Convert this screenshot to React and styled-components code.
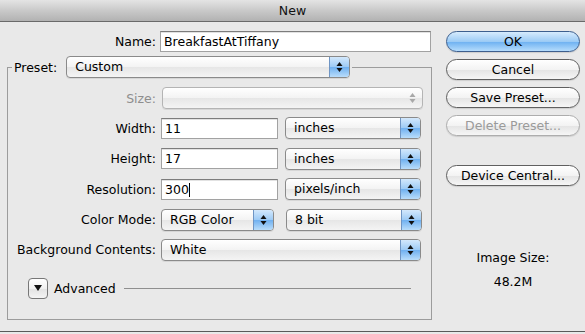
import styled, { createGlobalStyle } from 'styled-components';

const GlobalStyle = createGlobalStyle`
  html, body {
    margin: 0;
    padding: 0;
    background: #e9e9e9;
  }
  body {
    font-family: "DejaVu Sans", "Liberation Sans", sans-serif;
    font-size: 12.5px;
    color: #000;
  }
`;

const Arrows = ({ disabled }) => (
  <svg width="7" height="12" viewBox="0 0 7 12">
    <path d="M3.5 1 L6.5 5 L0.5 5 Z" fill={disabled ? '#a8a8a8' : '#111'} />
    <path d="M3.5 11 L6.5 7 L0.5 7 Z" fill={disabled ? '#a8a8a8' : '#111'} />
  </svg>
);

const Select = ({ value, width, disabled }) => (
  <PopUp $width={width} $disabled={disabled}>
    <PopText>{value}</PopText>
    <ArrowBox $disabled={disabled}>
      <Arrows disabled={disabled} />
    </ArrowBox>
  </PopUp>
);

const App = () => {
  return (
    <>
      <GlobalStyle />
      <Window>
        <TitleBar>New</TitleBar>
        <Body>
          <Main>
            <NameRow>
              <Label>Name:</Label>
              <TextField $width={271}>BreakfastAtTiffany</TextField>
            </NameRow>
            <Group>
              <Legend>
                <Label>Preset:</Label>
                <Select value="Custom" width={284} />
              </Legend>
              <Rows>
                <Label $disabled>Size:</Label>
                <Controls $indent={1}>
                  <Select value="" width={261} disabled />
                </Controls>

                <Label>Width:</Label>
                <Controls>
                  <TextField $width={117}>11</TextField>
                  <Select value="inches" width={136} />
                </Controls>

                <Label>Height:</Label>
                <Controls>
                  <TextField $width={117}>17</TextField>
                  <Select value="inches" width={136} />
                </Controls>

                <Label>Resolution:</Label>
                <Controls>
                  <TextField $width={117}>
                    300<Caret />
                  </TextField>
                  <Select value="pixels/inch" width={136} />
                </Controls>

                <Label>Color Mode:</Label>
                <Controls $gap={12}>
                  <Select value="RGB Color" width={113} />
                  <Select value="8 bit" width={136} />
                </Controls>

                <Label>Background Contents:</Label>
                <Controls>
                  <Select value="White" width={260} />
                </Controls>
              </Rows>
              <AdvancedRow>
                <Disclosure>
                  <svg width="8" height="6" viewBox="0 0 8 6">
                    <path d="M0 0 L8 0 L4 6 Z" fill="#111" />
                  </svg>
                </Disclosure>
                <AdvancedText>Advanced</AdvancedText>
                <Rule />
              </AdvancedRow>
            </Group>
          </Main>
          <Side>
            <Button $default>OK</Button>
            <Button>Cancel</Button>
            <Button>Save Preset...</Button>
            <Button disabled>Delete Preset...</Button>
            <Button $space={22}>Device Central...</Button>
            <SizeInfo>
              <div>Image Size:</div>
              <div>48.2M</div>
            </SizeInfo>
          </Side>
        </Body>
      </Window>
    </>
  );
};

export default App;

const Window = styled.div`
  height: 331px;
  display: flex;
  flex-direction: column;
  background: #e9e9e9;
  border-bottom: 1px solid #5a5a5a;
  box-shadow: 0 2px 0 #8a8a8a;
  overflow: hidden;
`;

const TitleBar = styled.div`
  height: 21px;
  line-height: 21px;
  text-align: center;
  font-size: 12.5px;
  color: #111;
  background: linear-gradient(#e4e4e4, #c9c9c9 50%, #b2b2b2);
  border-bottom: 1px solid #6a6a6a;
  flex-shrink: 0;
`;

const Body = styled.div`
  display: flex;
  gap: 14px;
  padding: 9px 0 0 7px;
`;

const Main = styled.div`
  width: 425px;
  display: flex;
  flex-direction: column;
`;

const Label = styled.span`
  text-align: right;
  white-space: nowrap;
  color: ${({ $disabled }) => ($disabled ? '#8e8e8e' : '#000')};
`;

const NameRow = styled.div`
  display: grid;
  grid-template-columns: 149px auto;
  column-gap: 4px;
  align-items: center;
  height: 21px;
`;

const TextField = styled.div`
  box-sizing: border-box;
  width: ${({ $width }) => $width}px;
  height: 21px;
  line-height: 19px;
  padding: 0 3px;
  background: #fff;
  border: 1px solid #a2a2a2;
  border-top-color: #7c7c7c;
  box-shadow: inset 0 1px 0 #e2e2e2;
  white-space: nowrap;
`;

const Caret = styled.span`
  display: inline-block;
  width: 1px;
  height: 14px;
  background: #000;
  vertical-align: -3px;
`;

const Group = styled.fieldset`
  margin: 4px 0 0;
  padding: 0 0 20px;
  border: 1px solid #9c9c9c;
  min-width: 0;
`;

const Legend = styled.legend`
  display: flex;
  align-items: center;
  gap: 9px;
  margin-left: 4px;
  padding: 0 2px 0 2px;
`;

const Rows = styled.div`
  display: grid;
  grid-template-columns: 148px auto;
  column-gap: 5px;
  row-gap: 8.4px;
  align-items: center;
  margin-top: 9px;
`;

const Controls = styled.div`
  display: flex;
  align-items: center;
  gap: ${({ $gap }) => $gap ?? 7}px;
  padding-left: ${({ $indent }) => $indent ?? 0}px;
  height: 22px;
`;

const PopUp = styled.div`
  box-sizing: border-box;
  width: ${({ $width }) => $width}px;
  height: 22px;
  display: flex;
  align-items: stretch;
  border: 1px solid ${({ $disabled }) => ($disabled ? '#b4b4b4' : '#8a8a8a')};
  border-radius: 4px;
  background: linear-gradient(#ffffff, #f3f3f3 50%, #e6e6e6 51%, #f4f4f4);
  box-shadow: 0 1px 0 rgba(0, 0, 0, 0.08);
  overflow: hidden;
  color: ${({ $disabled }) => ($disabled ? '#999' : '#000')};
`;

const PopText = styled.span`
  flex: 1;
  line-height: 20px;
  padding-left: 8px;
  white-space: nowrap;
`;

const ArrowBox = styled.div`
  width: 19px;
  display: flex;
  align-items: center;
  justify-content: center;
  border-left: 1px solid ${({ $disabled }) => ($disabled ? 'transparent' : '#6f95c4')};
  background: ${({ $disabled }) =>
    $disabled
      ? 'transparent'
      : 'linear-gradient(#d3e8fc, #9ccaf5 50%, #6fb0f0 51%, #b9ddfb)'};
`;

const AdvancedRow = styled.div`
  display: flex;
  align-items: center;
  margin: 17px 0 0 20px;
  height: 21px;
`;

const Disclosure = styled.div`
  box-sizing: border-box;
  width: 20px;
  height: 21px;
  display: flex;
  align-items: center;
  justify-content: center;
  border: 1px solid #777;
  border-radius: 4px;
  background: linear-gradient(#ffffff, #f0f0f0 50%, #e2e2e2 51%, #f4f4f4);
`;

const AdvancedText = styled.span`
  margin-left: 6px;
`;

const Rule = styled.div`
  height: 1px;
  background: #8f8f8f;
  width: 287px;
  margin-left: 8px;
`;

const Side = styled.div`
  width: 134px;
  display: flex;
  flex-direction: column;
  gap: 7px;
`;

const Button = styled.button`
  box-sizing: border-box;
  height: 21px;
  margin-top: ${({ $space }) => $space ?? 0}px;
  padding: 0;
  font: inherit;
  color: ${({ disabled }) => (disabled ? '#9a9a9a' : '#000')};
  border: 1px solid
    ${({ $default, disabled }) => ($default ? '#3d5f8e' : disabled ? '#adadad' : '#606060')};
  border-radius: 11px;
  background: ${({ $default }) =>
    $default
      ? 'linear-gradient(#d6ebfd, #9ccbf5 50%, #6cb0f1 51%, #b5dcfc)'
      : 'linear-gradient(#ffffff, #f3f3f3 50%, #e4e4e4 51%, #f6f6f6)'};
  box-shadow: 0 1px 1px rgba(0, 0, 0, 0.12);
`;

const SizeInfo = styled.div`
  margin-top: 57px;
  display: flex;
  flex-direction: column;
  align-items: center;
  gap: 9px;
`;
